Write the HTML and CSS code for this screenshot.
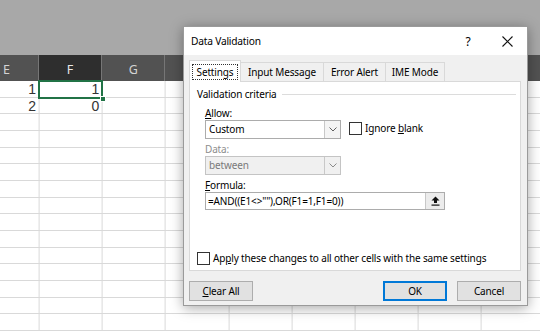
FILE: index.html
```html
<!DOCTYPE html>
<html>
<head>
<meta charset="utf-8">
<link rel="stylesheet" href="styles.css">
</head>
<body>
<div class="app">
  <div class="ribbon"></div>
  <div class="colheads">
    <div class="ch first">E</div>
    <div class="ch sel">F</div>
    <div class="ch">G</div>
    <div class="ch">H</div>
    <div class="ch">I</div>
    <div class="ch">J</div>
    <div class="ch">K</div>
    <div class="ch">L</div>
    <div class="ch">M</div>
  </div>
  <div class="sheet">
    <div class="row">
      <div class="cell first">1</div>
      <div class="cell active">1<span class="handle"></span></div>
    </div>
    <div class="row">
      <div class="cell first">2</div>
      <div class="cell">0</div>
    </div>
  </div>

  <div class="dialog">
    <div class="titlebar">
      <span class="title">Data Validation</span>
      <span class="help">?</span>
      <span class="close">
        <svg width="11" height="11" viewBox="0 0 11 11"><path d="M0.5 0.5 L10.5 10.5 M10.5 0.5 L0.5 10.5" stroke="#111" stroke-width="1.1" fill="none"/></svg>
      </span>
    </div>
    <div class="dbody">
      <div class="tabs">
        <div class="tab active t-settings"><span class="focus">Settings</span></div>
        <div class="tab t-input">Input Message</div>
        <div class="tab t-error">Error Alert</div>
        <div class="tab t-ime">IME Mode</div>
      </div>
      <div class="panel">
        <div class="group"><span class="glabel">Validation criteria</span><span class="rule"></span></div>
        <div class="fields">
          <div class="lbl"><u>A</u>llow:</div>
          <div class="line">
            <div class="combo">
              <span class="val">Custom</span>
              <span class="arrow"><svg width="8" height="5" viewBox="0 0 8 5"><path d="M0.5 0.5 L4 4 L7.5 0.5" stroke="#606060" stroke-width="1" fill="none"/></svg></span>
            </div>
            <div class="chk"><span class="box"></span><span>Ignore <u>b</u>lank</span></div>
          </div>
          <div class="lbl gap disabled">Data:</div>
          <div class="line">
            <div class="combo off">
              <span class="val">between</span>
              <span class="arrow"><svg width="8" height="5" viewBox="0 0 8 5"><path d="M0.5 0.5 L4 4 L7.5 0.5" stroke="#8a8a8a" stroke-width="1" fill="none"/></svg></span>
            </div>
          </div>
          <div class="lbl gap"><u>F</u>ormula:</div>
          <div class="input">
            <span class="formula">=AND((E1&lt;&gt;""),OR(F1=1,F1=0))</span>
            <span class="pick"><svg width="9" height="10" viewBox="0 0 9 10"><path d="M4.5 0.5 L8.5 4.5 L6 4.5 L6 7 L3 7 L3 4.5 L0.5 4.5 Z" fill="#111"/><rect x="0.5" y="8.5" width="8" height="1.2" fill="#111"/></svg></span>
          </div>
        </div>
        <div class="chk apply"><span class="box"></span><span>Ap<u>p</u>ly these changes to all other cells with the same settings</span></div>
      </div>
      <div class="buttons">
        <div class="btn"><u>C</u>lear All</div>
        <div class="spacer"></div>
        <div class="btn primary">OK</div>
        <div class="btn">Cancel</div>
      </div>
    </div>
  </div>
</div>
</body>
</html>
```
FILE: styles.css
```css
* { box-sizing: border-box; }
html, body { margin: 0; padding: 0; }
body { width: 540px; height: 331px; overflow: hidden; background: #fff; }

.app {
  position: relative;
  width: 540px;
  height: 331px;
  display: flex;
  flex-direction: column;
  overflow: hidden;
}

.ribbon { height: 55px; background: #a8a8a8; flex: none; }

.colheads {
  height: 26px;
  flex: none;
  display: flex;
  background: #525252;
  font-family: "Noto Sans", sans-serif;
  font-size: 12.5px;
  color: #d4d4d4;
}
.ch {
  flex: 0 0 63.2px;
  display: flex;
  align-items: center;
  justify-content: center;
  border-right: 1px solid #767676;
  padding-top: 2px;
}
.ch.first { flex-basis: 39px; justify-content: flex-start; padding-left: 3px; }
.ch.sel { background: #2e2e2e; color: #e8e8e8; }

.sheet {
  flex: 1;
  background-image:
    repeating-linear-gradient(to bottom, transparent 0 15.67px, #d9d9d9 15.67px 16.67px),
    repeating-linear-gradient(to right, #d9d9d9 0 1px, transparent 1px 63.2px);
  background-size: 100% 100%, 632px 100%;
  background-position: 0 0, 38.6px 0;
  background-repeat: no-repeat, repeat-x;
  font-family: "Liberation Sans", sans-serif;
  font-size: 14px;
  color: #333;
}
.row { display: flex; height: 16.67px; line-height: 16.67px; }
.cell { flex: 0 0 63.2px; text-align: right; padding-right: 3px; position: relative; }
.cell.first { flex-basis: 39px; }
.cell.active::after {
  content: "";
  position: absolute;
  left: -1px; top: -1px; right: -1px; bottom: -1px;
  border: 2px solid #217346;
}
.handle {
  position: absolute;
  right: -4px; bottom: -4px;
  width: 6px; height: 6px;
  background: #217346;
  border: 1px solid #fff;
  z-index: 1;
}

/* dialog */
.dialog {
  position: absolute;
  left: 183px;
  top: 26px;
  width: 345px;
  height: 280px;
  border: 1px solid #9a9a9a;
  background: #f0f0f0;
  box-shadow: 0 2px 12px rgba(0,0,0,0.35);
  display: flex;
  flex-direction: column;
  font-family: "Noto Sans", sans-serif;
  font-size: 10px;
  letter-spacing: -0.15px;
  color: #000;
}
.titlebar {
  height: 28px;
  flex: none;
  background: #fff;
  display: flex;
  align-items: center;
  padding-left: 7px;
  padding-right: 10px;
}
.title { font-size: 10.2px; letter-spacing: -0.2px; }
.help { margin-left: auto; width: 14px; text-align: center; font-size: 12px; margin-right: 22px; }
.close { width: 20px; display: flex; justify-content: center; }

.dbody {
  flex: 1;
  display: flex;
  flex-direction: column;
  padding: 5px 6px 6px 5px;
}
.tabs {
  display: flex;
  align-items: flex-end;
  height: 22px;
  margin-bottom: -1px;
  position: relative;
  z-index: 1;
}
.tab {
  height: 19px;
  border: 1px solid #d9d9d9;
  border-bottom: none;
  background: #f0f0f0;
  display: flex;
  align-items: center;
  justify-content: center;
  margin-bottom: 1px;
  white-space: nowrap;
}
.tab + .tab { border-left: none; }
.tab.active {
  height: 22px;
  background: #fff;
  margin-bottom: 0;
  align-items: flex-start;
  padding-top: 3px;
}
.t-settings { width: 52px; }
.t-input { width: 83px; }
.t-error { width: 62px; }
.t-ime { width: 59px; }
.focus {
  border: 1px dotted #333;
  width: 46px;
  height: 16px;
  display: flex;
  align-items: center;
  justify-content: center;
}

.panel {
  height: 190px;
  flex: none;
  background: #fff;
  border: 1px solid #d9d9d9;
  display: flex;
  flex-direction: column;
  padding: 5px 4px 5px 0;
}
.group {
  display: flex;
  align-items: center;
  height: 14px;
  padding-left: 7px;
}
.glabel { margin-right: 5px; }
.rule { flex: 1; border-top: 1px solid #dcdcdc; }

.fields { padding-left: 15px; display: flex; flex-direction: column; }
.lbl { height: 14px; line-height: 14px; margin-top: 5px; }
.lbl.gap { margin-top: 3px; }
.disabled { color: #8d8d8d; }
.line { display: flex; align-items: flex-start; }
.combo {
  width: 136px;
  height: 19px;
  border: 1px solid #acacac;
  background: #fff;
  display: flex;
}
.combo .val { flex: 1; padding-left: 3px; line-height: 17px; }
.combo .arrow {
  width: 16px;
  border-left: 1px solid #c8c8c8;
  background: #f4f4f4;
  display: flex;
  align-items: center;
  justify-content: center;
}
.combo.off { background: #f0f0f0; color: #7a7a7a; border-color: #c4c4c4; }
.combo.off .arrow { background: #f0f0f0; }

.chk { display: flex; align-items: center; }
.line .chk { margin-left: 8px; margin-top: 1px; }
.box {
  width: 13px;
  height: 13px;
  border: 1px solid #333;
  background: #fff;
  margin-right: 3px;
  flex: none;
}
.input {
  width: 240px;
  height: 18px;
  border: 1px solid #acacac;
  background: #fff;
  display: flex;
  align-items: center;
}
.formula { flex: 1; padding-left: 2px; white-space: nowrap; }
.pick {
  width: 19px;
  height: 16px;
  border-left: 1px solid #c8c8c8;
  background: #ececec;
  display: flex;
  align-items: center;
  justify-content: center;
}
.apply { margin-top: auto; padding-left: 7px; height: 14px; }

.buttons {
  display: flex;
  margin-top: 10px;
  gap: 10px;
}
.spacer { flex: 1; }
.btn {
  width: 64px;
  height: 20px;
  border: 1px solid #adadad;
  background: #e1e1e1;
  display: flex;
  align-items: center;
  justify-content: center;
}
.btn.primary { border-color: #0078d7; box-shadow: inset 0 0 0 1px #0078d7; }
```
